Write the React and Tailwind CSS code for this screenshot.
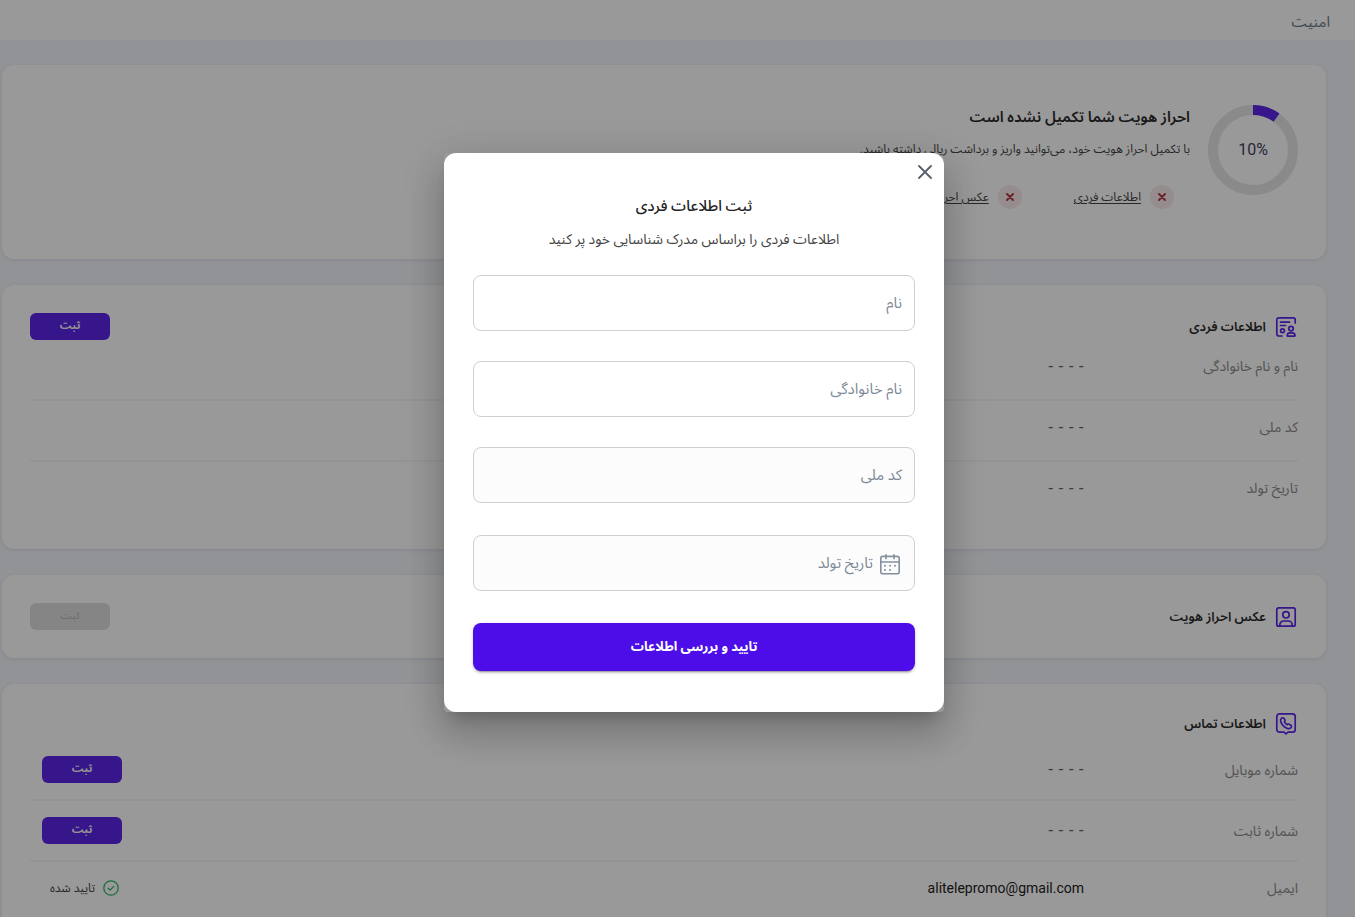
import { useState } from 'react';

const IdCardIcon = () => (
  <svg width="24" height="24" viewBox="0 0 24 24" fill="none" stroke="#5c23e8" strokeWidth="1.7" strokeLinecap="round" strokeLinejoin="round">
    <path d="M8 21H4.800a2 2 0 0 1-2-2V4.800a2 2 0 0 1 2-2h14.400a2 2 0 0 1 2 2V8" />
    <path d="M6.500 7.200h9M6.500 10.500h5" />
    <circle cx="8.500" cy="15.800" r="1.900" />
    <circle cx="17" cy="13.600" r="2.300" />
    <path d="M13.200 20.500c0-1.700 1.200-2.700 2.600-2.700h2.600c1.400 0 2.600 1 2.600 2.700 0 .4-.3.700-.7.700h-6.400c-.4 0-.7-.3-.7-.7z" />
  </svg>
);

const PortraitIcon = () => (
  <svg width="24" height="24" viewBox="0 0 24 24" fill="none" stroke="#5c23e8" strokeWidth="1.7" strokeLinecap="round" strokeLinejoin="round">
    <rect x="2.800" y="2.800" width="18.400" height="18.400" rx="1.800" />
    <circle cx="12" cy="9.800" r="3.200" />
    <path d="M5.800 21v-1a4 4 0 0 1 4-4h4.400a4 4 0 0 1 4 4v1" />
  </svg>
);

const ContactIcon = () => (
  <svg width="24" height="24" viewBox="0 0 24 24" fill="none" stroke="#5c23e8" strokeWidth="1.7" strokeLinecap="round" strokeLinejoin="round">
    <path d="M5.500 1.800h13a2.700 2.700 0 0 1 2.700 2.700v13a2.700 2.700 0 0 1-2.700 2.700H14L12 21.800l-2-1.600H5.500a2.700 2.700 0 0 1-2.700-2.700v-13a2.700 2.700 0 0 1 2.700-2.700z" />
    <path d="M7.600 6.200c1-.8 2.100-.5 2.600.4l.7 1.300c.3.800.1 1.400-.5 1.900.5 1.300 1.400 2.300 2.700 2.800.5-.6 1.300-.7 1.900-.4l1.600.9c1 .6 1.100 1.700.4 2.500-1 1-2.300 1.400-3.600.9-3.400-1.200-5.700-3.700-6.700-6.900-.3-1.300 0-2.600.9-3.400z" />
  </svg>
);

const CalendarIcon = () => (
  <svg width="24" height="24" viewBox="0 0 24 24" fill="none" stroke="#84909e" strokeWidth="1.6" strokeLinecap="round">
    <rect x="2.800" y="5.400" width="18.400" height="17.400" rx="2" />
    <path d="M2.800 11h18.400M8 3.800v4M16 3.800v4" />
    <path d="M7 14.800h.01M12 14.800h.01M17 14.800h.01M7 19h.01M12 19h.01" strokeWidth="2" />
  </svg>
);

const CheckIcon = () => (
  <svg width="16" height="16" viewBox="0 0 16 16" fill="none" stroke="#2eb566" strokeWidth="1.3" strokeLinecap="round" strokeLinejoin="round">
    <circle cx="8" cy="8" r="7.200" />
    <path d="M5.200 8.300l1.900 1.800 3.700-3.700" />
  </svg>
);

const ProgressRing = ({ value }) => {
  const length = 2 * Math.PI * 40;
  return (
    <div className="grid size-[90px] shrink-0 place-items-center">
      <svg className="col-start-1 row-start-1" width="90" height="90" viewBox="0 0 90 90" fill="none" strokeWidth="10">
        <circle cx="45" cy="45" r="40" stroke="#e6e6e6" />
        <circle cx="45" cy="45" r="40" stroke="#5c23e8" strokeDasharray={`${(length * value) / 100} ${length}`} transform="rotate(-90 45 45)" />
      </svg>
      <span className="col-start-1 row-start-1 text-base text-[#45435f]" dir="ltr">{value}%</span>
    </div>
  );
};

const MissingStep = ({ label }) => (
  <li className="flex items-center gap-[9px]">
    <span className="grid size-6 place-items-center rounded-full bg-[#f7eaeb]">
      <svg width="8" height="8" viewBox="0 0 8 8" stroke="#b83a45" strokeWidth="1.900" strokeLinecap="round">
        <path d="M1 1l6 6M7 1L1 7" />
      </svg>
    </span>
    <a href="#" className="text-xs whitespace-nowrap text-[#444] underline underline-offset-2">{label}</a>
  </li>
);

const SubmitButton = ({ disabled }) => (
  <button
    type="button"
    disabled={disabled}
    className="flex h-[27px] w-20 items-center justify-center rounded-md bg-[#5c23e8] text-[11px] font-bold text-[#f4f4f4] disabled:bg-[#dedede] disabled:font-normal disabled:text-[#b8b8b8]"
  >
    ثبت
  </button>
);

const Card = ({ className, children }) => (
  <section className={`rounded-xl bg-white shadow-[0_1px_4px_rgba(60,50,120,0.12)] ${className}`}>{children}</section>
);

const CardHeader = ({ icon, title, action }) => (
  <div className="flex items-center justify-between">
    <div className="flex items-center gap-2">
      {icon}
      <h2 className="text-[13px] font-semibold text-[#2b2b2b]">{title}</h2>
    </div>
    {action}
  </div>
);

const EmptyValue = () => (
  <span className="font-['DejaVu_Sans'] text-[15px] text-[#666]" dir="ltr">- - - -</span>
);

const Field = ({ id, label, icon, muted }) => (
  <div className={`flex h-14 items-center gap-[5px] rounded-lg border border-[#cfcfcf] px-3 ${muted ? 'bg-[#fcfcfc]' : 'bg-white'}`}>
    {icon}
    <label htmlFor={id} className="text-[15px] whitespace-nowrap text-[#7d8997]">{label}</label>
    <input id={id} type="text" className="h-full min-w-0 flex-1 bg-transparent text-[15px] outline-none" />
  </div>
);

const IdentityModal = ({ onClose }) => (
  <div className="fixed inset-0 flex items-center justify-center bg-black/40 pb-[52px] pl-[33px]">
    <div
      role="dialog"
      aria-labelledby="identity-title"
      className="w-[500px] max-w-full rounded shadow-[0_11px_15px_-7px_rgba(0,0,0,0.2),0_24px_38px_3px_rgba(0,0,0,0.14),0_9px_46px_8px_rgba(0,0,0,0.12)]"
    >
      <div className="rounded-xl bg-white px-[29px] pb-[41px]">
        <div className="-mx-[22px] flex h-[38px] items-center">
          <button type="button" aria-label="بستن" onClick={onClose} className="grid size-6 place-items-center">
            <svg width="14" height="14" viewBox="0 0 14 14" stroke="#56616d" strokeWidth="1.8" strokeLinecap="round">
              <path d="M1 1l12 12M13 1L1 13" />
            </svg>
          </button>
        </div>
        <div className="text-center">
          <h1 id="identity-title" className="text-[15px] leading-[30px] font-medium text-[#222]">ثبت اطلاعات فردی</h1>
          <p className="mt-1 text-sm leading-7 text-[#444]">اطلاعات فردی را براساس مدرک شناسایی خود پر کنید</p>
        </div>
        <form className="mt-[22px] flex flex-col" onSubmit={(e) => e.preventDefault()}>
          <div className="flex flex-col gap-[30px]">
            <Field id="first-name" label="نام" />
            <Field id="last-name" label="نام خانوادگی" />
            <Field id="national-code" label="کد ملی" muted />
          </div>
          <div className="mt-8 flex flex-col gap-8">
            <Field id="birth-date" label="تاریخ تولد" icon={<CalendarIcon />} muted />
            <button
              type="submit"
              className="h-12 rounded-lg bg-[#4d0de8] text-[13px] font-bold text-white shadow-[0_3px_1px_-2px_rgba(0,0,0,0.2),0_2px_2px_rgba(0,0,0,0.14),0_1px_5px_rgba(0,0,0,0.12)]"
            >
              تایید و بررسی اطلاعات
            </button>
          </div>
        </form>
      </div>
    </div>
  </div>
);

const App = () => {
  const [isOpen, setIsOpen] = useState(true);

  const personalRows = ['نام و نام خانوادگی', 'کد ملی', 'تاریخ تولد'];
  const contactRows = [
    { label: 'شماره موبایل' },
    { label: 'شماره ثابت' },
    { label: 'ایمیل', value: 'alitelepromo@gmail.com' }
  ];

  return (
    <div dir="rtl" className="h-screen overflow-hidden bg-[#f4f6fa] font-[Roboto,'Noto_Sans_Arabic','DejaVu_Sans',sans-serif]">
      <header className="flex h-10 items-center bg-white px-[25px] pt-1 text-[15px] text-[#6d7a8a]">امنیت</header>

      <main className="flex flex-col gap-[26px] pt-[25px] pr-[29px] pl-[2px]">
        <Card className="flex gap-[18px] px-7 pt-10 pb-[50px]">
          <ProgressRing value={10} />
          <div>
            <h2 className="text-[15px] leading-6 font-semibold text-[#2b2b2b]">احراز هویت شما تکمیل نشده است</h2>
            <p className="mt-2.5 text-xs leading-5 text-[#444]">با تکمیل احراز هویت خود، می‌توانید واریز و برداشت ریالی داشته باشید.</p>
            <ul className="mt-[26px] flex gap-[52px] pr-4">
              <MissingStep label="اطلاعات فردی" />
              <MissingStep label="عکس احراز هویت" />
            </ul>
          </div>
        </Card>

        <Card className="p-7">
          <CardHeader icon={<IdCardIcon />} title="اطلاعات فردی" action={<SubmitButton />} />
          {personalRows.map((label) => (
            <div key={label} className="flex h-[61px] items-center border-b-2 border-[#f6f6f6] pb-[7px] last:h-[59px] last:border-0">
              <span className="w-[214px] text-sm text-[#8c8c8c]">{label}</span>
              <EmptyValue />
            </div>
          ))}
        </Card>

        <Card className="p-7">
          <CardHeader icon={<PortraitIcon />} title="عکس احراز هویت" action={<SubmitButton disabled />} />
        </Card>

        <Card className="p-7">
          <CardHeader icon={<ContactIcon />} title="اطلاعات تماس" />
          <div className="mt-1">
            {contactRows.map((row) => (
              <div key={row.label} className="flex h-[61px] items-center border-b-2 border-[#f6f6f6] last:h-[52px] last:border-0">
                <span className="w-[214px] text-sm text-[#8c8c8c]">{row.label}</span>
                {row.value ? <span className="text-sm text-[#222]" dir="ltr">{row.value}</span> : <EmptyValue />}
                {row.value ? (
                  <div className="mr-auto flex items-center gap-2 pl-5 text-xs text-[#444]">
                    <CheckIcon />
                    تایید شده
                  </div>
                ) : (
                  <div className="mr-auto pl-3">
                    <SubmitButton />
                  </div>
                )}
              </div>
            ))}
          </div>
        </Card>
      </main>

      {isOpen && <IdentityModal onClose={() => setIsOpen(false)} />}
    </div>
  );
};

export default App;
